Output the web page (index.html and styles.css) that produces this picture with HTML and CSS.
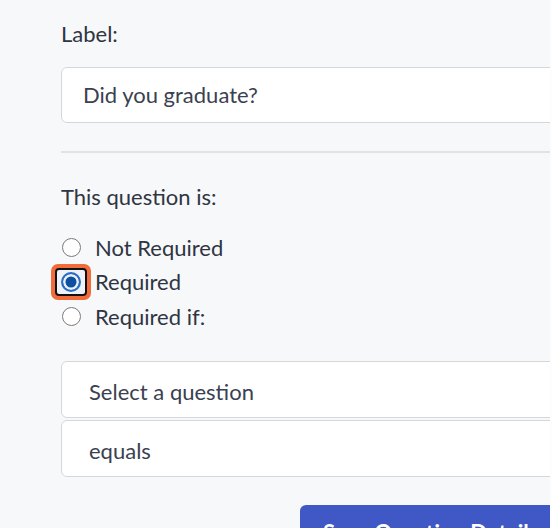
FILE: index.html
```html
<!DOCTYPE html>
<html lang="en">
<head>
<meta charset="utf-8">
<title>Question</title>
<link rel="stylesheet" href="styles.css">
</head>
<body>
<div class="page">
  <div class="form">
    <div class="field-label">Label:</div>
    <div class="text-input">Did you graduate?</div>
    <hr class="divider">
    <div class="field-label section">This question is:</div>
    <div class="options">
      <div class="option">
        <span class="radio-slot"><span class="radio"></span></span>
        <span class="option-text">Not Required</span>
      </div>
      <div class="option">
        <span class="radio-slot">
          <span class="focus"><span class="focus-inner"><span class="radio checked"></span></span></span>
        </span>
        <span class="option-text">Required</span>
      </div>
      <div class="option">
        <span class="radio-slot"><span class="radio"></span></span>
        <span class="option-text">Required if:</span>
      </div>
    </div>
    <div class="selects">
      <div class="select">Select a question</div>
      <div class="select">equals</div>
    </div>
    <div class="actions">
      <div class="button">Save Question Details</div>
    </div>
  </div>
</div>
</body>
</html>
```

FILE: styles.css
```css
html, body {
  margin: 0;
  padding: 0;
  background: #fdfdfe;
}

.page {
  width: 550px;
  height: 528px;
  overflow: hidden;
  background: #f7f8fa;
  font-family: Lato, "Noto Sans", sans-serif;
  font-size: 22px;
  color: #333a46;
}

.form {
  width: 600px;
  padding: 21px 0 0 61px;
  box-sizing: border-box;
}

.field-label {
  line-height: 26px;
  height: 26px;
  color: #2f3541;
}

.text-input {
  margin-top: 20px;
  height: 56px;
  box-sizing: border-box;
  border: 1px solid #d3d8de;
  border-radius: 6px;
  background: #fff;
  padding: 0 0 0 21px;
  display: flex;
  align-items: center;
  line-height: 26px;
  color: #3a4150;
}

.divider {
  margin: 28px 0 0 0;
  border: 0;
  height: 2px;
  background: #dfe2e6;
}

.section {
  margin-top: 30.5px;
}

.options {
  margin-top: 21px;
  display: flex;
  flex-direction: column;
}

.option {
  height: 34.5px;
  display: flex;
  align-items: center;
  line-height: 26px;
}

.radio-slot {
  width: 20px;
  height: 20px;
  display: flex;
  align-items: center;
  justify-content: center;
  margin-right: 14px;
}

.radio {
  width: 19px;
  height: 19px;
  box-sizing: border-box;
  border: 1.5px solid #7b7b7b;
  border-radius: 50%;
  background: #fff;
  flex: none;
}

.radio.checked {
  width: 20px;
  height: 20px;
  border: 2px solid #2a6cc6;
  background: #0f4f9f;
  box-shadow: inset 0 0 0 2.5px #e9f0fa;
}

.focus {
  flex: none;
  margin: -9px -10px;
  padding: 4px;
  background: #f26b3a;
  border-radius: 7px;
  display: flex;
}

.focus-inner {
  border: 2px solid #111;
  border-radius: 4px;
  background: #eef3fa;
  padding: 2px 4px;
  display: flex;
}

.option-text {
  color: #2f3541;
}

.selects {
  margin-top: 27px;
  display: flex;
  flex-direction: column;
  gap: 2px;
}

.select {
  height: 57px;
  box-sizing: border-box;
  border: 1px solid #d3d8de;
  border-radius: 6px;
  background: #fff;
  padding: 4px 0 0 27px;
  display: flex;
  align-items: center;
  line-height: 26px;
  color: #3a4150;
}

.actions {
  margin-top: 28px;
  padding-left: 239px;
}

.button {
  height: 52px;
  background: #3f58c6;
  border-radius: 6px;
  color: #fff;
  font-weight: 700;
  padding: 15px 0 0 23px;
  box-sizing: border-box;
  line-height: 26px;
  white-space: nowrap;
}
```
